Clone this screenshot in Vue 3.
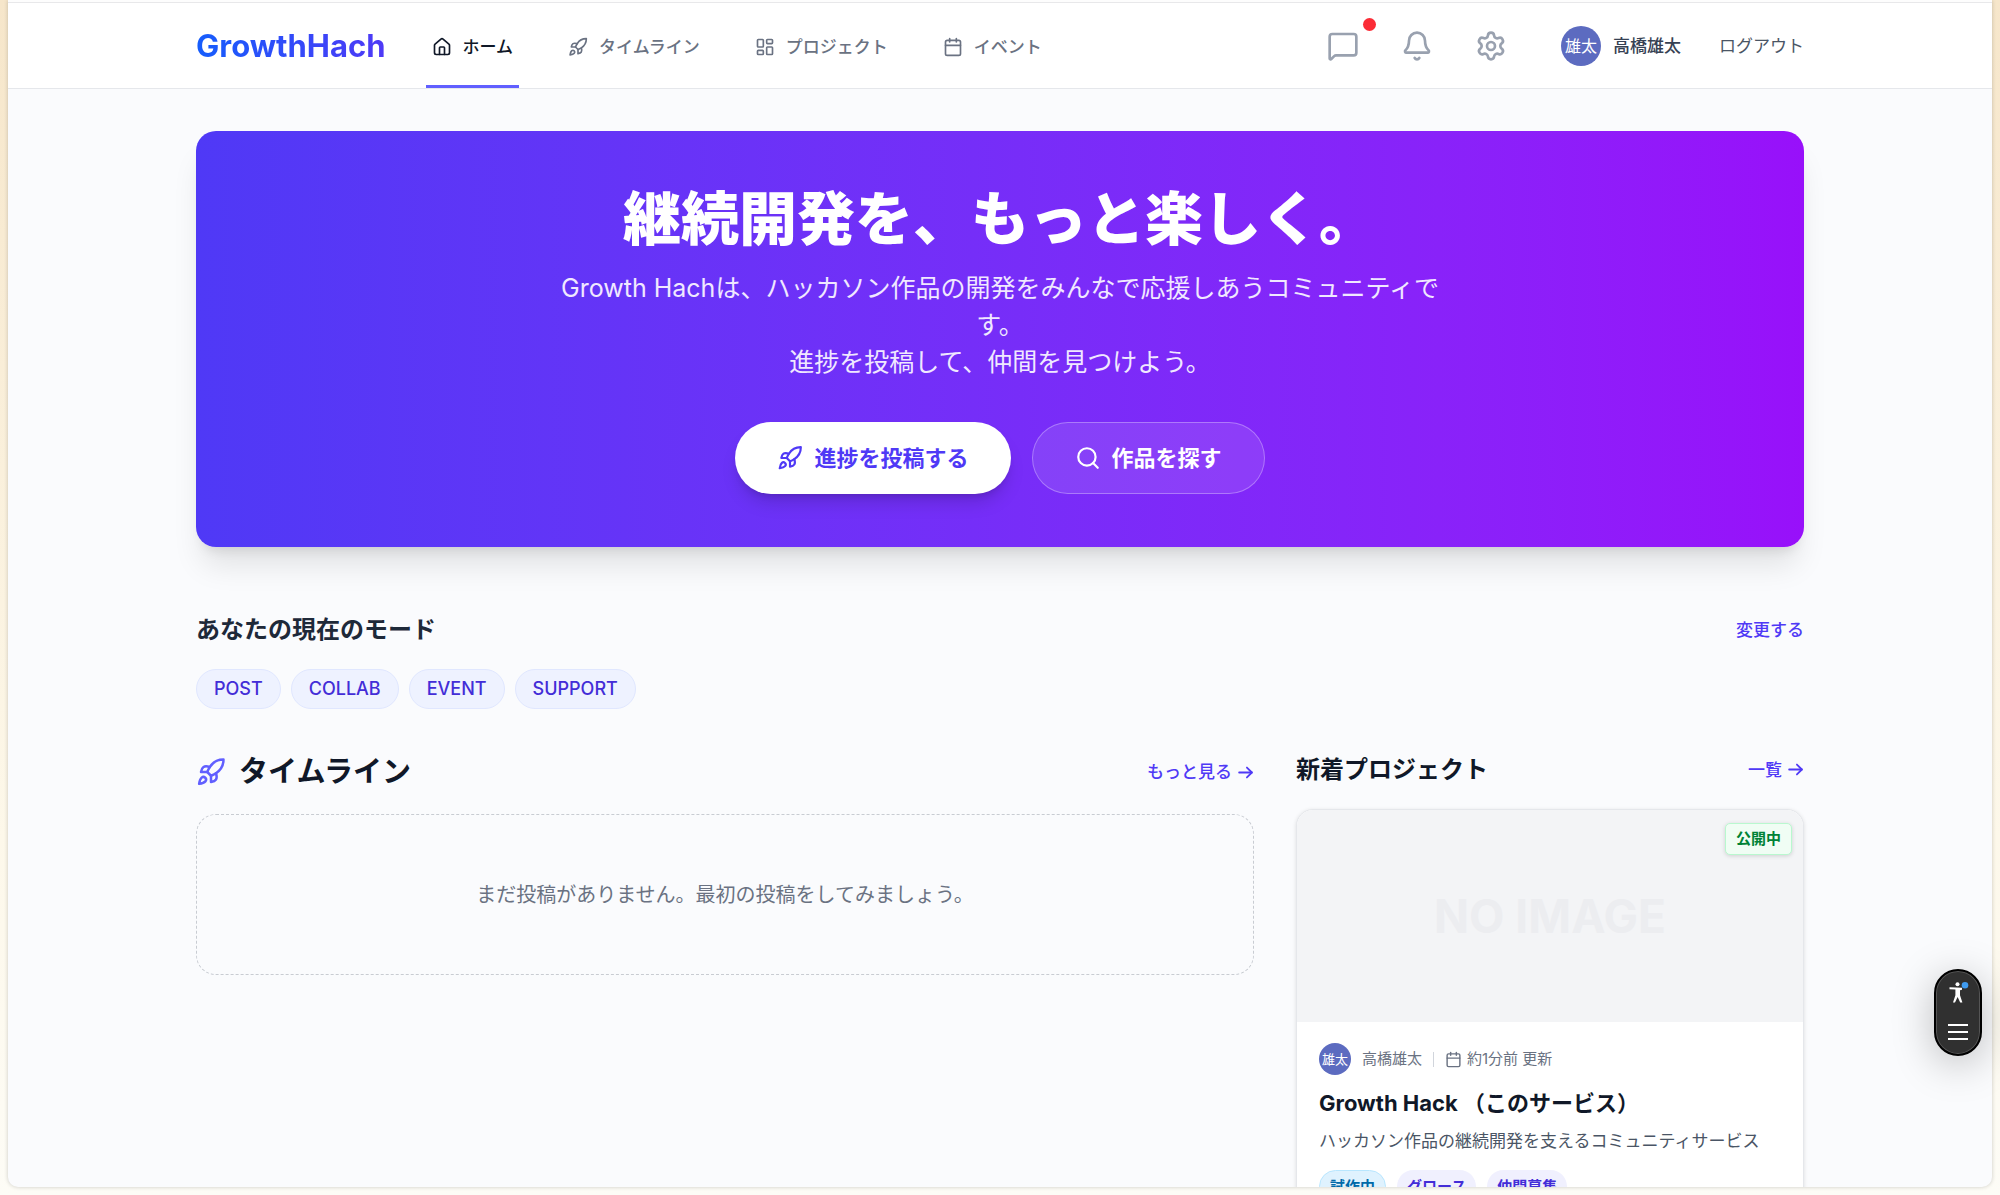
<script setup>
import { h } from 'vue'

const paths = {
  house: [
    'M15 21v-8a1 1 0 0 0-1-1h-4a1 1 0 0 0-1 1v8',
    'M3 10a2 2 0 0 1 .709-1.528l7-6a2 2 0 0 1 2.582 0l7 6A2 2 0 0 1 21 10v9a2 2 0 0 1-2 2H5a2 2 0 0 1-2-2z',
  ],
  rocket: [
    'M4.5 16.5c-1.5 1.26-2 5-2 5s3.74-.5 5-2c.71-.84.7-2.13-.09-2.91a2.18 2.18 0 0 0-2.91-.09z',
    'm12 15-3-3a22 22 0 0 1 2-3.95A12.88 12.88 0 0 1 22 2c0 2.72-.78 7.5-6 11a22.35 22.35 0 0 1-4 2z',
    'M9 12H4s.55-3.03 2-4c1.62-1.08 5 0 5 0',
    'M12 15v5s3.03-.55 4-2c1.08-1.62 0-5 0-5',
  ],
  dashboard: [
    'M4 3h5a1 1 0 0 1 1 1v7a1 1 0 0 1-1 1H4a1 1 0 0 1-1-1V4a1 1 0 0 1 1-1z',
    'M15 3h5a1 1 0 0 1 1 1v3a1 1 0 0 1-1 1h-5a1 1 0 0 1-1-1V4a1 1 0 0 1 1-1z',
    'M15 12h5a1 1 0 0 1 1 1v7a1 1 0 0 1-1 1h-5a1 1 0 0 1-1-1v-7a1 1 0 0 1 1-1z',
    'M4 16h5a1 1 0 0 1 1 1v3a1 1 0 0 1-1 1H4a1 1 0 0 1-1-1v-3a1 1 0 0 1 1-1z',
  ],
  calendar: ['M8 2v4', 'M16 2v4', 'M5 4h14a2 2 0 0 1 2 2v14a2 2 0 0 1-2 2H5a2 2 0 0 1-2-2V6a2 2 0 0 1 2-2z', 'M3 10h18'],
  message: ['M22 17a2 2 0 0 1-2 2H6.828a2 2 0 0 0-1.414.586l-2.202 2.202A.71.71 0 0 1 2 21.286V5a2 2 0 0 1 2-2h16a2 2 0 0 1 2 2z'],
  bell: [
    'M10.268 21a2 2 0 0 0 3.464 0',
    'M3.262 15.326A1 1 0 0 0 4 17h16a1 1 0 0 0 .74-1.673C19.41 13.956 18 12.499 18 8A6 6 0 0 0 6 8c0 4.499-1.411 5.956-2.738 7.326',
  ],
  settings: [
    'M9.671 4.136a2.34 2.34 0 0 1 4.659 0 2.34 2.34 0 0 0 3.319 1.915 2.34 2.34 0 0 1 2.33 4.033 2.34 2.34 0 0 0 0 3.831 2.34 2.34 0 0 1-2.33 4.033 2.34 2.34 0 0 0-3.319 1.915 2.34 2.34 0 0 1-4.659 0 2.34 2.34 0 0 0-3.32-1.915 2.34 2.34 0 0 1-2.33-4.033 2.34 2.34 0 0 0 0-3.831A2.34 2.34 0 0 1 6.35 6.051a2.34 2.34 0 0 0 3.319-1.915',
    'M12 9a3 3 0 1 1 0 6 3 3 0 0 1 0-6z',
  ],
  search: ['m21 21-4.34-4.34', 'M11 3a8 8 0 1 1 0 16 8 8 0 0 1 0-16z'],
  arrow: ['M3 12h18', 'm14 5 7 7-7 7'],
}

const Icon = (props) =>
  h(
    'svg',
    { viewBox: '0 0 24 24', fill: 'none', stroke: 'currentColor', 'stroke-width': props.weight || 2, 'stroke-linecap': 'round', 'stroke-linejoin': 'round', 'aria-hidden': 'true' },
    paths[props.name].map((d) => h('path', { d })),
  )
Icon.props = ['name', 'weight']

const nav = [
  { label: 'ホーム', icon: 'house', active: true },
  { label: 'タイムライン', icon: 'rocket' },
  { label: 'プロジェクト', icon: 'dashboard' },
  { label: 'イベント', icon: 'calendar' },
]
const modes = ['POST', 'COLLAB', 'EVENT', 'SUPPORT']
</script>

<template>
  <div class="desktop">
    <div class="window">
      <header class="header">
        <div class="container header-row">
          <a href="#" class="logo">GrowthHach</a>
          <nav class="nav">
            <a v-for="item in nav" :key="item.label" href="#" class="nav-item" :class="{ active: item.active }">
              <Icon class="icon-nav" :name="item.icon" />{{ item.label }}
            </a>
          </nav>
          <div class="tools">
            <button class="tool" aria-label="メッセージ"><Icon name="message" /><span class="dot"></span></button>
            <button class="tool" aria-label="通知"><Icon name="bell" /></button>
            <button class="tool" aria-label="設定"><Icon name="settings" /></button>
          </div>
          <a href="#" class="user"><span class="avatar">雄太</span>高橋雄太</a>
          <button class="logout">ログアウト</button>
        </div>
      </header>

      <main class="container main">
        <section class="hero">
          <h1>継続開発を、もっと楽しく。</h1>
          <p>Growth Hachは、ハッカソン作品の開発をみんなで応援しあうコミュニティです。<br />進捗を投稿して、仲間を見つけよう。</p>
          <div class="actions">
            <button class="btn primary"><Icon name="rocket" />進捗を投稿する</button>
            <button class="btn ghost"><Icon name="search" />作品を探す</button>
          </div>
        </section>

        <section class="modes">
          <div class="row">
            <h2 class="mode-title">あなたの現在のモード</h2>
            <a href="#" class="link">変更する</a>
          </div>
          <div class="pills">
            <span v-for="m in modes" :key="m" class="pill">{{ m }}</span>
          </div>
        </section>

        <div class="columns">
          <section>
            <div class="row">
              <h2 class="timeline-title"><Icon name="rocket" />タイムライン</h2>
              <a href="#" class="link">もっと見る<Icon name="arrow" weight="2.5" /></a>
            </div>
            <div class="empty">まだ投稿がありません。最初の投稿をしてみましょう。</div>
          </section>

          <section>
            <div class="row">
              <h2>新着プロジェクト</h2>
              <a href="#" class="link">一覧<Icon name="arrow" weight="2.5" /></a>
            </div>
            <article class="card">
              <div class="cover">
                NO IMAGE
                <span class="status">公開中</span>
              </div>
              <div class="card-body">
                <div class="meta">
                  <span class="avatar small">雄太</span>
                  <span>高橋雄太</span>
                  <span class="divider"></span>
                  <span class="updated"><Icon name="calendar" />約1分前 更新</span>
                </div>
                <h3>Growth Hack （このサービス）</h3>
                <p>ハッカソン作品の継続開発を支えるコミュニティサービス</p>
                <div class="tags">
                  <span class="tag stage">試作中</span>
                  <span class="tag">グロース</span>
                  <span class="tag">仲間募集</span>
                </div>
              </div>
            </article>
          </section>
        </div>
      </main>
    </div>

    <div class="widget">
      <button aria-label="アクセシビリティ">
        <svg viewBox="0 0 24 24" width="24" height="24" aria-hidden="true">
          <circle cx="11.5" cy="3.2" r="2" fill="#fff" />
          <path d="M3.5 6.3 16 6.8v2l-2 .4v5l2.4 7.3h-2.2L11.6 16 9 21.500H7l2.400-7.300V8.600L3.500 8.300z" fill="#fff" />
          <circle cx="19" cy="4.300" r="3.300" fill="#3f9bf0" />
        </svg>
      </button>
      <button aria-label="メニュー">
        <svg viewBox="0 0 24 24" width="24" height="24" aria-hidden="true">
          <path d="M2 5h20M2 12h20M2 19h20" stroke="#fff" stroke-width="2" />
        </svg>
      </button>
    </div>
  </div>
</template>

<style>
body {
  margin: 0;
}
</style>

<style scoped>
* {
  box-sizing: border-box;
}
h1,
h2,
h3,
p {
  margin: 0;
}
a {
  text-decoration: none;
}
button {
  border: 0;
  background: none;
  padding: 0;
  font: inherit;
  color: inherit;
  cursor: pointer;
}
svg {
  display: block;
  flex: none;
}
.desktop {
  height: 100vh;
  padding: 0 8px 8px;
  background: linear-gradient(#f6e6ca, #fdf8ea 70%, #fdfcf6);
  font-family: Inter, "Noto Sans CJK JP", sans-serif;
  font-size: 17px;
  line-height: 24px;
  color: #101828;
}
.window {
  height: 100%;
  overflow: hidden;
  background: #fafbfd;
  border-top: 2px solid #fdfdfd;
  border-radius: 0 0 10px 10px;
  box-shadow: 0 0 4px rgba(0, 0, 0, 0.2);
}
.container {
  max-width: 1608px;
  margin: 0 auto;
}
.header {
  background: #fff;
  border-top: 1px solid #e8e8ea;
  border-bottom: 1px solid #e5e7eb;
}
.header-row {
  display: flex;
  align-items: center;
  height: 85px;
}
.logo {
  font-size: 31px;
  font-weight: 700;
  line-height: 40px;
  background: linear-gradient(90deg, #155dfc, #4f39f6);
  background-clip: text;
  color: transparent;
}
.nav {
  display: flex;
  align-self: stretch;
  gap: 43px;
  margin-left: 40px;
}
.nav-item {
  display: flex;
  align-items: center;
  gap: 11px;
  padding: 5px 6px 0;
  border-bottom: 3px solid transparent;
  font-weight: 500;
  color: #6a7282;
}
.nav-item.active {
  color: #101828;
  border-color: #615fff;
}
.icon-nav {
  width: 20px;
  height: 20px;
}
.tools {
  display: flex;
  gap: 42px;
  margin-left: auto;
  color: #99a1af;
}
.tool {
  position: relative;
}
.tool svg {
  width: 32px;
  height: 32px;
}
.dot {
  position: absolute;
  top: -12px;
  right: -17px;
  width: 13px;
  height: 13px;
  border-radius: 50%;
  background: #fb2c36;
}
.user {
  display: flex;
  align-items: center;
  gap: 12px;
  margin-left: 54px;
  font-weight: 500;
  color: #364153;
}
.avatar {
  display: grid;
  place-items: center;
  width: 40px;
  height: 40px;
  border-radius: 50%;
  background: #5c6bc0;
  color: #fff;
  font-size: 16px;
  font-weight: 400;
}
.avatar.small {
  width: 32px;
  height: 32px;
  font-size: 13px;
}
.logout {
  margin-left: 38px;
  color: #4a5565;
}
.main {
  padding-top: 42px;
}
.hero {
  padding: 53px 20px;
  border-radius: 20px;
  background: linear-gradient(90deg in oklab, #4f39f6, #9810fa);
  box-shadow: 0 24px 30px -6px rgba(0, 0, 0, 0.1), 0 10px 12px -7px rgba(0, 0, 0, 0.1);
  text-align: center;
  color: #fff;
}
.hero h1 {
  font-size: 58px;
  font-weight: 800;
  line-height: 70px;
}
.hero p {
  max-width: 884px;
  margin: 16px auto 41px;
  font-size: 25px;
  line-height: 37px;
  color: #f0e8ff;
}
.actions {
  display: flex;
  justify-content: center;
  gap: 21px;
}
.btn {
  display: flex;
  align-items: center;
  gap: 11px;
  height: 72px;
  padding: 0 42px;
  border-radius: 36px;
  font-size: 22px;
  font-weight: 700;
}
.btn svg {
  width: 26px;
  height: 26px;
}
.primary {
  background: #fff;
  color: #4f39f6;
  box-shadow: 0 12px 18px -4px rgba(0, 0, 0, 0.15), 0 5px 7px -4px rgba(0, 0, 0, 0.15);
}
.ghost {
  background: rgba(255, 255, 255, 0.1);
  border: 1px solid rgba(255, 255, 255, 0.3);
}
.modes {
  margin: 64px 0 42px;
}
.row {
  display: flex;
  align-items: center;
  justify-content: space-between;
  margin-bottom: 21px;
}
h2 {
  font-size: 24px;
  font-weight: 700;
  line-height: 37px;
}
.mode-title {
  color: #1e2939;
}
.link {
  display: flex;
  align-items: center;
  gap: 5px;
  font-weight: 500;
  color: #4f39f6;
}
.link svg {
  width: 17px;
  height: 17px;
}
.pills {
  display: flex;
  gap: 10px;
}
.pill {
  padding: 7px 17px;
  border: 1px solid #e0e7ff;
  border-radius: 20px;
  background: #eef2ff;
  font-size: 18px;
  font-weight: 500;
  color: #432dd7;
}
.columns {
  display: grid;
  grid-template-columns: minmax(0, 1fr) 508px;
  gap: 42px;
}
.timeline-title {
  display: flex;
  align-items: center;
  gap: 13px;
  font-size: 29px;
  line-height: 42px;
}
.timeline-title svg {
  width: 30px;
  height: 30px;
  color: #615fff;
}
.empty {
  padding: 65px 20px 63px;
  border: 1px dashed #c8ccd2;
  border-radius: 20px;
  text-align: center;
  font-size: 20px;
  line-height: 31px;
  color: #6a7282;
}
.card {
  overflow: hidden;
  border: 1px solid #e5e7eb;
  border-radius: 17px;
  background: #fff;
  box-shadow: 0 1px 4px rgba(0, 0, 0, 0.12);
}
.cover {
  position: relative;
  display: grid;
  place-items: center;
  height: 212px;
  background: #f3f4f6;
  font-size: 46px;
  font-weight: 700;
  color: #ecedf0;
}
.status {
  position: absolute;
  top: 13px;
  right: 11px;
  padding: 3px 10px;
  border: 1px solid #b9f8cf;
  border-radius: 5px;
  background: #f0fdf4;
  box-shadow: 0 1px 4px rgba(0, 0, 0, 0.15);
  font-size: 15px;
  color: #008236;
}
.card-body {
  padding: 21px 22px;
}
.meta {
  display: flex;
  align-items: center;
  gap: 11px;
  font-size: 15px;
  color: #6a7282;
}
.divider {
  width: 1px;
  height: 15px;
  background: #d1d5dc;
}
.updated {
  display: flex;
  align-items: center;
  gap: 5px;
}
.updated svg {
  width: 17px;
  height: 17px;
}
h3 {
  margin-top: 10px;
  font-size: 22px;
  line-height: 37px;
}
.card p {
  margin: 5px 0 15px;
  line-height: 28px;
  color: #4a5565;
}
.tags {
  display: flex;
  gap: 11px;
}
.tag {
  height: 33px;
  padding: 0 10px;
  border-radius: 17px;
  background: #f0f0fe;
  font-size: 15px;
  font-weight: 600;
  line-height: 33px;
  color: #432dd7;
}
.tag.stage {
  border: 1px solid #b8e6fe;
  background: #dff2fe;
  line-height: 31px;
  color: #0069a8;
}
.widget {
  position: fixed;
  right: 18px;
  bottom: 139px;
  display: flex;
  flex-direction: column;
  align-items: center;
  justify-content: space-between;
  width: 48px;
  height: 87px;
  padding: 10px 0;
  border: 2px solid #000;
  border-radius: 24px;
  background: #303030;
  box-shadow: inset 0 0 0 1px #555, 0 8px 40px rgba(0, 0, 0, 0.25);
}
</style>
